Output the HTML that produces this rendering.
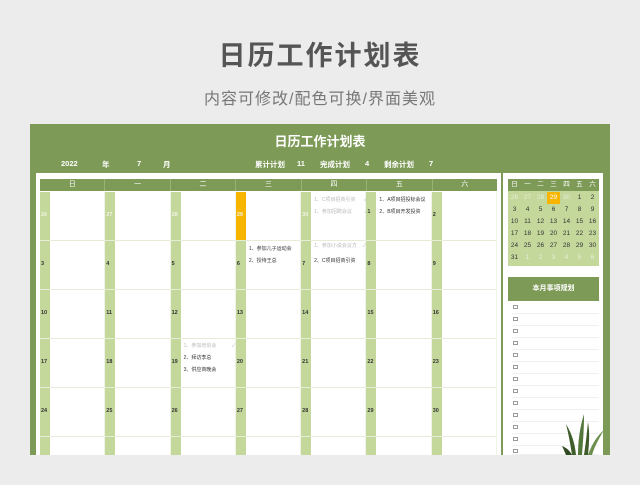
<!DOCTYPE html>
<html><head><meta charset="utf-8"><style>
*{margin:0;padding:0;box-sizing:border-box}
body{width:640px;height:485px;background:#ececec;font-family:"Liberation Sans","Noto Sans CJK SC",sans-serif;position:relative;overflow:hidden}
.a{position:absolute}
.t1{top:34px;left:0;width:640px;text-align:center;font-size:27px;color:#555;letter-spacing:2px;font-weight:bold}
.t2{top:85px;left:0;width:640px;text-align:center;font-size:16px;color:#777;letter-spacing:1px}
.panel{left:30px;top:124px;width:580px;height:331px;background:#7d9a57}
.ptitle{left:30px;top:131px;width:580px;text-align:center;color:#fff;font-size:13px;font-weight:bold}
.info{top:159px;color:#fff;font-size:7.5px;font-weight:bold}
.main{left:36px;top:173px;width:465px;height:282px;background:#fff}
.hdr{left:40px;top:179px;width:457px;height:12px;background:#7d9a57;display:flex}
.hdr div{flex:1;color:#fff;font-size:7px;text-align:center;line-height:12px;border-right:1px solid #9ab276}
.grid{left:40px;top:192px;width:457px;height:263px;overflow:hidden;display:grid;grid-template-columns:repeat(7,1fr);grid-auto-rows:49px}
.c{position:relative;border-bottom:1px solid #e6ecd6;border-right:1px solid #f0f3e8}
.c .s{position:absolute;left:0;top:0;width:10px;height:100%;background:#c5d89c}
.c .n{position:absolute;left:1px;top:20px;font-size:5.5px;font-weight:bold;color:#333}
.c .n.g{color:#eef3e2}
.c .s.y{background:#f7b500}
.tx{position:absolute;left:13px;font-size:5px;color:#333;white-space:nowrap}
.tx.d{color:#bbb}
.side{left:503px;top:173px;width:100px;height:282px;background:#fff}
.mini{left:508px;top:179px;width:91px;height:87px;background:#c5d89c}
.mh{left:508px;top:179px;width:91px;height:12px;background:#7d9a57;display:flex}
.mh div,.mr div{flex:1;text-align:center;font-size:6.5px;line-height:12px;color:#fff}
.mr{left:508px;width:91px;height:12px;display:flex}
.mr div{color:#333}
.mr div.g{color:#e6eed6}
.plan{left:508px;top:277px;width:91px;height:24px;background:#7d9a57;color:#fff;font-size:7px;font-weight:bold;text-align:center;line-height:24px}
.li{left:512px;width:87px;height:12px;border-bottom:1px solid #f0f0f0}
.li i{position:absolute;left:1px;top:3px;width:5px;height:4px;border:1px solid #999}
</style></head><body>
<div class="a t1">日历工作计划表</div>
<div class="a t2">内容可修改/配色可换/界面美观</div>
<div class="a panel"></div>
<div class="a ptitle">日历工作计划表</div>
<div class="a info" style="left:61px">2022</div>
<div class="a info" style="left:102px">年</div>
<div class="a info" style="left:137px">7</div>
<div class="a info" style="left:163px">月</div>
<div class="a info" style="left:255px">累计计划</div>
<div class="a info" style="left:297px">11</div>
<div class="a info" style="left:320px">完成计划</div>
<div class="a info" style="left:365px">4</div>
<div class="a info" style="left:384px">剩余计划</div>
<div class="a info" style="left:429px">7</div>
<div class="a main"></div>
<div class="a hdr"><div>日</div><div>一</div><div>二</div><div>三</div><div>四</div><div>五</div><div style="border:0">六</div></div>
<div class="a grid">
<div class="c"><div class="s"></div><div class="n g">26</div></div>
<div class="c"><div class="s"></div><div class="n g">27</div></div>
<div class="c"><div class="s"></div><div class="n g">28</div></div>
<div class="c"><div class="s y"></div><div class="n g">29</div></div>
<div class="c"><div class="s"></div><div class="n g">30</div><div class="tx d" style="top:4px">1、C项目招商引资 &nbsp; &nbsp; &nbsp;✓</div><div class="tx d" style="top:16px">1、参加招聘会议 &nbsp; &nbsp; &nbsp; &nbsp; ✓</div></div>
<div class="c"><div class="s"></div><div class="n" style="top:17px">1</div><div class="tx" style="top:4px">1、A项目招投标会议</div><div class="tx" style="top:16px">2、B项目开发投资</div></div>
<div class="c"><div class="s"></div><div class="n">2</div></div>
<div class="c"><div class="s"></div><div class="n">3</div></div>
<div class="c"><div class="s"></div><div class="n">4</div></div>
<div class="c"><div class="s"></div><div class="n">5</div></div>
<div class="c"><div class="s"></div><div class="n">6</div><div class="tx" style="top:4px">1、参加儿子运动会</div><div class="tx" style="top:16px">2、授待王总</div></div>
<div class="c"><div class="s"></div><div class="n">7</div><div class="tx d" style="top:1px">1、参加小说会议方 &nbsp; &nbsp;✓</div><div class="tx" style="top:16px">2、C项目招商引资</div></div>
<div class="c"><div class="s"></div><div class="n">8</div></div>
<div class="c"><div class="s"></div><div class="n">9</div></div>
<div class="c"><div class="s"></div><div class="n">10</div></div>
<div class="c"><div class="s"></div><div class="n">11</div></div>
<div class="c"><div class="s"></div><div class="n">12</div></div>
<div class="c"><div class="s"></div><div class="n">13</div></div>
<div class="c"><div class="s"></div><div class="n">14</div></div>
<div class="c"><div class="s"></div><div class="n">15</div></div>
<div class="c"><div class="s"></div><div class="n">16</div></div>
<div class="c"><div class="s"></div><div class="n">17</div></div>
<div class="c"><div class="s"></div><div class="n">18</div></div>
<div class="c"><div class="s"></div><div class="n">19</div><div class="tx d" style="top:3px">1、参加培训会 &nbsp; &nbsp; &nbsp; &nbsp; &nbsp; ✓</div><div class="tx" style="top:15px">2、拜访李总</div><div class="tx" style="top:27px">3、供应商晚会</div></div>
<div class="c"><div class="s"></div><div class="n">20</div></div>
<div class="c"><div class="s"></div><div class="n">21</div></div>
<div class="c"><div class="s"></div><div class="n">22</div></div>
<div class="c"><div class="s"></div><div class="n">23</div></div>
<div class="c"><div class="s"></div><div class="n">24</div></div>
<div class="c"><div class="s"></div><div class="n">25</div></div>
<div class="c"><div class="s"></div><div class="n">26</div></div>
<div class="c"><div class="s"></div><div class="n">27</div></div>
<div class="c"><div class="s"></div><div class="n">28</div></div>
<div class="c"><div class="s"></div><div class="n">29</div></div>
<div class="c"><div class="s"></div><div class="n">30</div></div>
<div class="c"><div class="s"></div></div><div class="c"><div class="s"></div></div><div class="c"><div class="s"></div></div><div class="c"><div class="s"></div></div><div class="c"><div class="s"></div></div><div class="c"><div class="s"></div></div><div class="c"><div class="s"></div></div>
</div>
<div class="a side"></div>
<div class="a mini"></div>
<div class="a mh"><div>日</div><div>一</div><div>二</div><div>三</div><div>四</div><div>五</div><div>六</div></div>
<div class="a" style="left:547px;top:192px;width:13px;height:12px;background:#f7b500"></div>
<div class="a mr" style="top:192px"><div class="g">26</div><div class="g">27</div><div class="g">28</div><div style="color:#fff">29</div><div class="g">30</div><div>1</div><div>2</div></div>
<div class="a mr" style="top:204px"><div>3</div><div>4</div><div>5</div><div>6</div><div>7</div><div>8</div><div>9</div></div>
<div class="a mr" style="top:216px"><div>10</div><div>11</div><div>12</div><div>13</div><div>14</div><div>15</div><div>16</div></div>
<div class="a mr" style="top:228px"><div>17</div><div>18</div><div>19</div><div>20</div><div>21</div><div>22</div><div>23</div></div>
<div class="a mr" style="top:240px"><div>24</div><div>25</div><div>26</div><div>27</div><div>28</div><div>29</div><div>30</div></div>
<div class="a mr" style="top:252px"><div>31</div><div class="g">1</div><div class="g">2</div><div class="g">3</div><div class="g">4</div><div class="g">5</div><div class="g">6</div></div>
<div class="a plan">本月事项规划</div>
<div class="a li" style="top:302px"><i></i></div>
<div class="a li" style="top:314px"><i></i></div>
<div class="a li" style="top:326px"><i></i></div>
<div class="a li" style="top:338px"><i></i></div>
<div class="a li" style="top:350px"><i></i></div>
<div class="a li" style="top:362px"><i></i></div>
<div class="a li" style="top:374px"><i></i></div>
<div class="a li" style="top:386px"><i></i></div>
<div class="a li" style="top:398px"><i></i></div>
<div class="a li" style="top:410px"><i></i></div>
<div class="a li" style="top:422px"><i></i></div>
<div class="a li" style="top:434px"><i></i></div>
<div class="a li" style="top:446px;height:9px;overflow:hidden"><i></i></div>
<svg class="a" style="left:562px;top:412px" width="45" height="43" viewBox="0 0 45 43">
<path d="M10 43 C8 30 6 20 4 12 C10 22 13 32 14 43Z" fill="#3f5e2c"/>
<path d="M16 43 C16 28 18 15 22 2 C22 18 21 30 20 43Z" fill="#52773a"/>
<path d="M22 43 C24 30 25 20 26 10 C28 22 27 32 26 43Z" fill="#3d5a28"/>
<path d="M26 43 C30 32 35 24 42 18 C36 28 32 36 30 43Z" fill="#6b8f4c"/>
<path d="M4 43 C2 38 1 36 0 34 C5 36 8 39 10 43Z" fill="#2f4a20"/>
</svg>
</body></html>
